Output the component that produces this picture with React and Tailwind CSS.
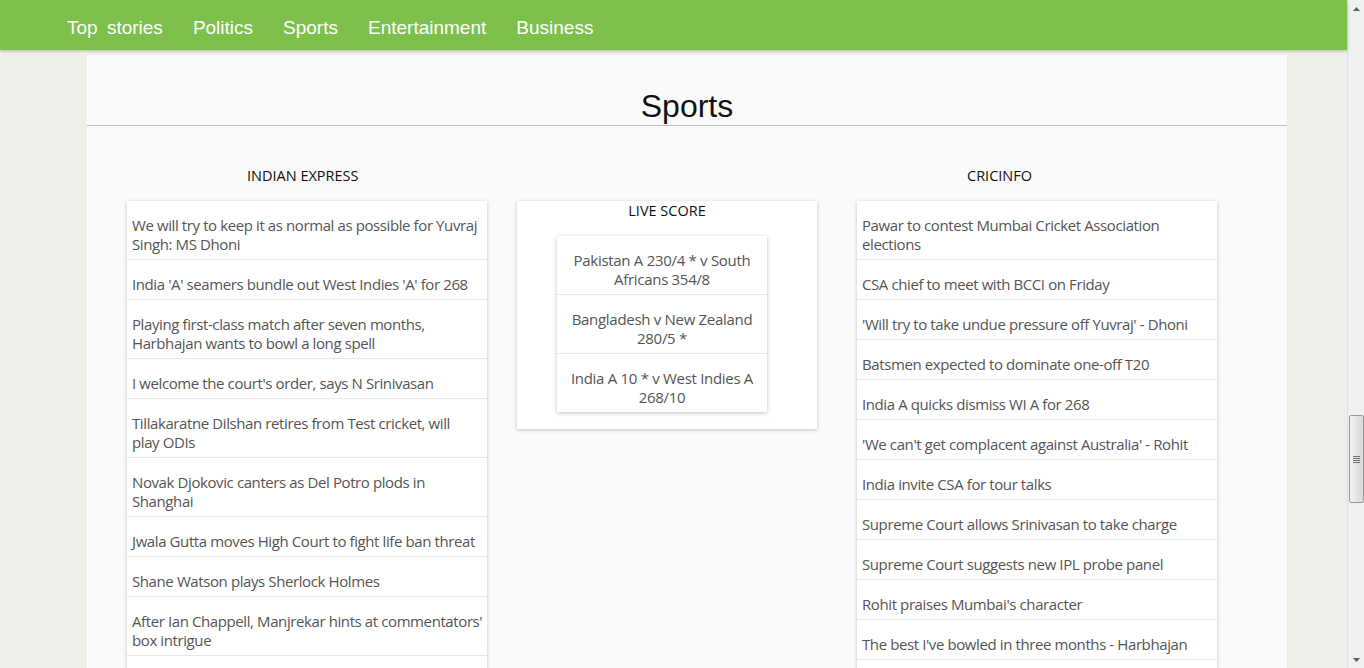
import React from "react";

const left = [
  "We will try to keep it as normal as possible for Yuvraj Singh: MS Dhoni",
  "India 'A' seamers bundle out West Indies 'A' for 268",
  "Playing first-class match after seven months, Harbhajan wants to bowl a long spell",
  "I welcome the court's order, says N Srinivasan",
  "Tillakaratne Dilshan retires from Test cricket, will play\u00a0ODIs",
  "Novak Djokovic canters as Del Potro plods in Shanghai",
  "Jwala Gutta moves High Court to fight life ban threat",
  "Shane Watson plays Sherlock Holmes",
  "After Ian Chappell, Manjrekar hints at commentators' box intrigue",
  "Sachin Tendulkar to play his 200th Test in Mumbai",
];

const right = [
  "Pawar to contest Mumbai Cricket Association elections",
  "CSA chief to meet with BCCI on Friday",
  "'Will try to take undue pressure off Yuvraj' - Dhoni",
  "Batsmen expected to dominate one-off T20",
  "India A quicks dismiss WI A for 268",
  "'We can't get complacent against Australia' - Rohit",
  "India invite CSA for tour talks",
  "Supreme Court allows Srinivasan to take charge",
  "Supreme Court suggests new IPL probe panel",
  "Rohit praises Mumbai's character",
  "The best I've bowled in three months - Harbhajan",
  "Dhoni backs Yuvraj to come good",
];

const live = [
  "Pakistan A 230/4 * v South Africans 354/8",
  "Bangladesh v New Zealand 280/5 *",
  "India A 10 * v West Indies A 268/10",
];

const nav = ["Top stories", "Politics", "Sports", "Entertainment", "Business"];

function List({ items }) {
  return (
    <ul className="w-[360px] bg-white shadow-[0_1px_4px_rgba(0,0,0,0.22)]">
      {items.map((t, i) => (
        <li
          key={i}
          className={`pl-[5px] pr-[3px] pt-[15px] pb-[5px] text-[15px] leading-[19px] text-[#555] tracking-[-0.4px] ${
            i > 0 ? "border-t border-[#e6e6e6]" : ""
          }`}
        >
          {t}
        </li>
      ))}
    </ul>
  );
}

export default function App() {
  return (
    <div
      className="w-[1364px] h-[668px] overflow-hidden flex bg-[#efeee9]"
      style={{ fontFamily: "'Open Sans', sans-serif" }}
    >
      <div className="flex-1 flex flex-col min-w-0">
        <nav className="h-[50px] shrink-0 bg-[#7dc04b] shadow-[0_1px_3px_rgba(0,0,0,0.25)] flex items-center pl-[67px] gap-[30px] pt-[6px] relative z-10">
          {nav.map((n) => (
            <span
              key={n}
              className="text-white text-[19px] leading-[24px] [word-spacing:4px]"
              style={{ fontFamily: "'Liberation Sans', Arial, sans-serif" }}
            >
              {n}
            </span>
          ))}
        </nav>
        <main className="ml-[87px] mt-[5px] w-[1200px] flex-1 bg-[#fafafa]">
          <div className="border-b border-[#bdbdbd] h-[71px] flex items-end justify-center pb-[1px]">
            <h1
              className="text-[32px] leading-[36px] text-[#111] font-light"
              style={{ fontFamily: "'Liberation Sans', Arial, sans-serif" }}
            >
              Sports
            </h1>
          </div>
          <div className="flex pl-[40px] pt-[39px]">
            <div className="w-[360px]">
              <h2 className="pl-[120px] pt-[1px] text-[14.5px] leading-[20px] text-[#111] h-[36px]">INDIAN EXPRESS</h2>
              <List items={left} />
            </div>
            <div className="w-[300px] ml-[30px] mt-[36px]">
              <div className="bg-white shadow-[0_1px_4px_rgba(0,0,0,0.22)] pt-[1px] pb-[17px]">
                <h3 className="text-center text-[14.5px] leading-[18px] text-[#111] h-[34px]">LIVE SCORE</h3>
                <ul className="ml-[40px] w-[210px] bg-white shadow-[0_1px_4px_rgba(0,0,0,0.25)]">
                  {live.map((t, i) => (
                    <li
                      key={i}
                      className={`px-[8px] pt-[15px] pb-[5px] text-center text-[15px] leading-[19px] text-[#555] tracking-[-0.3px] ${
                        i > 0 ? "border-t border-[#e6e6e6]" : ""
                      }`}
                    >
                      {t}
                    </li>
                  ))}
                </ul>
              </div>
            </div>
            <div className="w-[360px] ml-[40px]">
              <h2 className="pl-[110px] pt-[1px] text-[14.5px] leading-[20px] text-[#111] h-[36px]">CRICINFO</h2>
              <List items={right} />
            </div>
          </div>
        </main>
      </div>
      <div className="w-[17px] shrink-0 bg-[#f0f0f0] border-l border-[#e0e0e0] flex flex-col items-center relative">
        <div className="h-[17px] flex items-center justify-center">
          <svg width="7" height="4" viewBox="0 0 7 4"><path d="M0 4 L3.5 0 L7 4 Z" fill="#606060" /></svg>
        </div>
        <div className="flex-1 w-full relative">
          <div className="absolute left-[1px] right-0 top-[398px] h-[88px] rounded-[2px] border border-[#9a9a9a] bg-gradient-to-r from-[#f4f4f4] to-[#d8d8d8] flex flex-col items-center justify-center gap-[1px]">
            {[0, 1, 2, 3].map((k) => (
              <div key={k} className="w-[7px] h-[1px] bg-[#707070]" />
            ))}
          </div>
        </div>
        <div className="h-[17px] flex items-center justify-center">
          <svg width="7" height="4" viewBox="0 0 7 4"><path d="M0 0 L3.5 4 L7 0 Z" fill="#606060" /></svg>
        </div>
      </div>
    </div>
  );
}
